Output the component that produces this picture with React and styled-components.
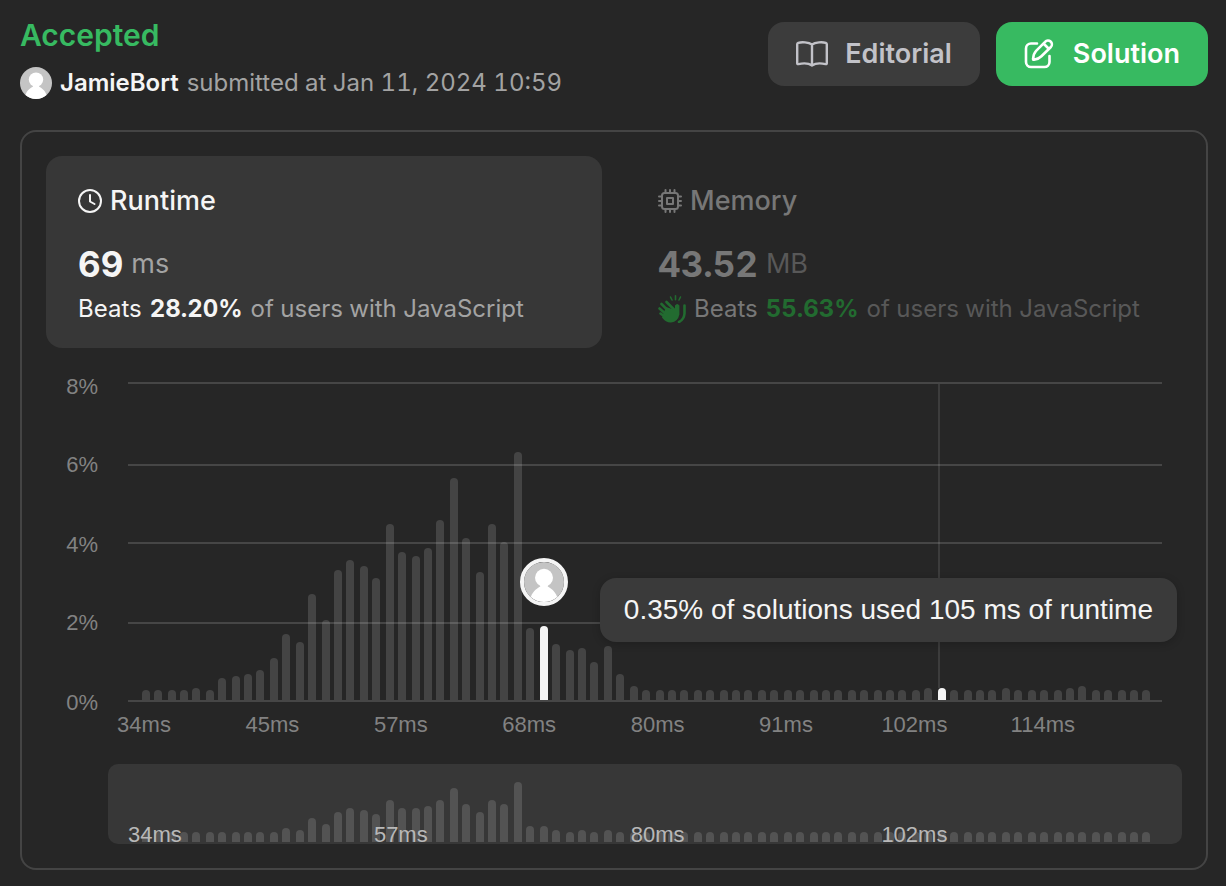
import React from "react";
import styled, { createGlobalStyle } from "styled-components";

const GlobalStyle = createGlobalStyle`
  *, *::before, *::after { box-sizing: border-box; }
  body {
    margin: 0;
    background: #262626;
    color: #f5f5f5;
    font-family: Inter, "Liberation Sans", sans-serif;
    font-variant-numeric: tabular-nums;
  }
  button { font: inherit; font-variant-numeric: inherit; color: inherit; border: 0; cursor: pointer; }
  h1, p { margin: 0; }
`;

const Page = styled.main`
  display: flex;
  flex-direction: column;
  gap: 30px;
  padding: 16px 18px 16px 20px;
`;

const Header = styled.header`
  display: flex;
  justify-content: space-between;
  align-items: flex-start;
  gap: 16px;
`;

const Summary = styled.div`
  display: flex;
  flex-direction: column;
  gap: 12px;
`;

const Status = styled.h1`
  color: #37ba61;
  font-size: 30px;
  line-height: 38px;
  font-weight: 600;
`;

const Byline = styled.div`
  display: flex;
  align-items: center;
  gap: 8px;
  font-size: 24px;
  line-height: 34px;
  color: #a3a3a3;
`;

const Author = styled.a`
  color: #f5f5f5;
  font-weight: 600;
  text-decoration: none;
`;

const Actions = styled.div`
  display: flex;
  gap: 16px;
  padding-top: 6px;
`;

const ActionButton = styled.button`
  display: flex;
  align-items: center;
  gap: 17px;
  height: 64px;
  padding: 0 28px;
  border-radius: 16px;
  font-size: 27px;
  line-height: 36px;
  font-weight: 600;
  background: ${(p) => (p.$primary ? "#37ba61" : "#3c3c3c")};
  color: ${(p) => (p.$primary ? "#ffffff" : "#c2c2c8")};
`;

const Panel = styled.section`
  display: flex;
  flex-direction: column;
  border: 2px solid #444444;
  border-radius: 16px;
  padding: 24px;
`;

const Metrics = styled.div`
  display: grid;
  grid-template-columns: 1fr 1fr;
  gap: 24px;
`;

const MetricCard = styled.button`
  display: flex;
  flex-direction: column;
  align-items: flex-start;
  height: 192px;
  padding: 26px 32px;
  border-radius: 16px;
  text-align: left;
  white-space: nowrap;
  background: ${(p) => (p.$active ? "#373737" : "transparent")};
  --strong: ${(p) => (p.$active ? "#f5f5f5" : "#777777")};
  --soft: ${(p) => (p.$active ? "#a3a3a3" : "#585858")};
  --share: ${(p) => (p.$active ? "#f5f5f5" : "#226b30")};
  color: var(--strong);
`;

const MetricTitle = styled.span`
  display: flex;
  align-items: center;
  gap: 8px;
  font-size: 27px;
  line-height: 37px;
  font-weight: 500;
`;

const MetricValue = styled.span`
  display: flex;
  align-items: center;
  gap: 8px;
  margin-top: 23px;
  font-size: 35px;
  line-height: 44px;
  font-weight: 700;
`;

const Unit = styled.span`
  font-size: 27px;
  font-weight: 400;
  color: var(--soft);
`;

const MetricNote = styled.span`
  display: flex;
  align-items: center;
  gap: 8px;
  font-size: 24px;
  line-height: 46px;
  color: var(--soft);

  b { color: var(--share); font-weight: 700; }
  em { color: var(--strong); font-style: normal; }
  svg { color: var(--share); }
`;

const ChartArea = styled.div`
  position: relative;
  margin-top: 24px;
`;

const ChartSvg = styled.svg`
  display: block;
  width: 100%;
  height: auto;
  overflow: visible;
  font-family: "Liberation Sans", sans-serif;
  font-size: 22px;
`;

const Tooltip = styled.div`
  position: absolute;
  right: 5px;
  top: 206px;
  padding: 14px 24px;
  border-radius: 16px;
  background: #3a3a3a;
  box-shadow: 0 2px 8px rgba(0, 0, 0, 0.2);
  font-family: "Liberation Sans", sans-serif;
  font-size: 28px;
  line-height: 36px;
  white-space: nowrap;
`;

const MAIN = [
  10, 10, 10, 10, 12, 10, 22, 24, 26, 30, 42, 66, 58, 106, 80, 130, 140, 134, 122, 176,
  148, 144, 152, 180, 222, 162, 128, 176, 158, 248, 72, 74, 56, 50, 52, 38, 54, 26, 14,
  ...Array(22).fill(10), 12, 12, 10, 10, 10, 10, 12, 10, 10, 10, 10, 12, 14, 10, 10, 10, 10, 10,
];

const OVERVIEW = [
  ...Array(11).fill(10), 14, 12, 24, 18, 30, 34, 32, 28, 42, 34, 34, 36, 42, 54, 38, 30,
  42, 38, 60, 16, 16, 12, 10, 12, 10, 12, ...Array(42).fill(10),
];

const GRID = [
  { label: "8%", line: 10, baseline: 22 },
  { label: "6%", line: 92, baseline: 100 },
  { label: "4%", line: 170, baseline: 180 },
  { label: "2%", line: 250, baseline: 258 },
  { label: "0%", line: 328, baseline: 338 },
];

const TICKS = ["34ms", "45ms", "57ms", "68ms", "80ms", "91ms", "102ms", "114ms"];

const HIGHLIGHTED = [31, 62];

const barX = (i) => 2 * Math.round((95.4 + i * 12.84) / 2);

const barPath = (x, base, h) =>
  `M${x} ${base}v${4 - h}a4 4 0 0 1 8 0v${h - 4}z`;

function Bars({ values, base, highlighted = [] }) {
  return values.map((h, i) => (
    <path
      key={i}
      d={barPath(barX(i), base, h)}
      fill={highlighted.includes(i) ? "#f5f5f5" : "rgba(255,255,255,0.14)"}
    />
  ));
}

function AvatarArt({ ring }) {
  return (
    <>
      <circle cx="16" cy="16" r="16" fill="#c4c4c4" />
      <ellipse cx="16" cy="12.6" rx="7.2" ry="7.2" fill="#fff" />
      <path d="M13 17h6v2.600c1.500.9 6 3.400 7.500 8.400A16 16 0 0 1 5.500 28C7 23 11.500 20.500 13 19.600z" fill="#fff" />
      {ring && <circle cx="16" cy="16" r="17.600" fill="none" stroke="#f5f5f5" strokeWidth="3.200" />}
    </>
  );
}

function RuntimeChart() {
  return (
    <ChartSvg viewBox="0 0 1136 472" role="img" aria-label="Runtime distribution">
      <Bars values={MAIN} base={328} highlighted={HIGHLIGHTED} />
      {GRID.map((g) => (
        <g key={g.label}>
          <rect x="82" y={g.line} width="1034" height="2" fill="rgba(255,255,255,0.15)" />
          <text x="52" y={g.baseline} textAnchor="end" fill="#828282">{g.label}</text>
        </g>
      ))}
      <rect x="892" y="12" width="2" height="304" fill="rgba(255,255,255,0.1)" />
      {TICKS.map((t, i) => (
        <text key={t} x={98 + i * 128.4} y="360" textAnchor="middle" fill="#828282">{t}</text>
      ))}
      <g transform="translate(478 190) scale(1.250)"><AvatarArt ring /></g>
      <rect x="62" y="392" width="1074" height="80" rx="10" fill="#373737" />
      <Bars values={OVERVIEW} base={470} />
      {TICKS.map((t, i) =>
        i % 2 === 0 ? (
          <text
            key={t}
            x={i === 0 ? 82 : 98 + i * 128.4}
            y="470"
            textAnchor={i === 0 ? "start" : "middle"}
            fill="#b8b8b8"
          >
            {t}
          </text>
        ) : null
      )}
    </ChartSvg>
  );
}

const stroke = { fill: "none", stroke: "currentColor", strokeLinecap: "round", strokeLinejoin: "round" };

const BookIcon = () => (
  <svg width="32" height="26" viewBox="0 0 32 26" {...stroke} strokeWidth="2.400">
    <path d="M16 3.500C12.500 1 5.500.900 2.200 1.800Q1.200 2.200 1.200 3.200v19q0 1.200 1.200.9C6.500 22.200 12.500 22 16 24.500c3.500-2.500 9.500-2.300 13.600-1.400q1.200.3 1.200-.9v-19q0-1-1-1.400C26.500.900 19.500 1 16 3.500zv21" />
  </svg>
);

const EditIcon = () => (
  <svg width="32" height="32" viewBox="0 -1 32 32" {...stroke} strokeWidth="2.600">
    <path d="M13 4.500H7a5 5 0 0 0-5 5V23a5 5 0 0 0 5 5h13.500a5 5 0 0 0 5-5v-6" />
    <path d="M10 20.800c-.8.100-1-.3-.9-1 .3-3.600 1-6 3-8l9-9a3.800 3.800 0 0 1 5.800 5.200l-9.500 9.300c-2 2-4 3-7.400 3.500zM20 5l5 5" />
  </svg>
);

const ClockIcon = () => (
  <svg width="24" height="24" viewBox="0 0 24 24" {...stroke} strokeWidth="2">
    <circle cx="12" cy="12" r="11" />
    <path d="M12 6v6.500l4.500 2.500" />
  </svg>
);

const ChipIcon = () => (
  <svg width="24" height="24" viewBox="0 0 24 24" {...stroke} strokeWidth="2">
    <rect x="4" y="4" width="16" height="16" rx="2.500" />
    <rect x="9" y="9" width="6" height="6" />
    <path d="M7.500 1v3M12 1v3M16.500 1v3M7.500 20v3M12 20v3M16.500 20v3M1 7.500h3M1 12h3M1 16.500h3M20 7.500h3M20 12h3M20 16.500h3" />
  </svg>
);

const ClapIcon = () => (
  <svg width="28" height="28" viewBox="0 0 28 28" {...stroke}>
    <path d="M1.500 13.500l8 7M2.500 18.500l6 4.500M3.500 9l9 9M8.500 7l9 9" strokeWidth="2.600" />
    <path d="M8 12l9 3V10.500q2.200-3 4.400 0v9q-1.400 7-8.400 8-5 .3-9-5z" fill="currentColor" stroke="none" />
    <path d="M26.500 10.500v8q-.5 6-5.500 8.500" strokeWidth="2.600" />
    <path d="M12.500 2l1.500 3M17.500.8v4M22.500 2l-1.500 3" strokeWidth="1.600" />
  </svg>
);

export default function App() {
  return (
    <>
      <GlobalStyle />
      <Page>
        <Header>
          <Summary>
            <Status>Accepted</Status>
            <Byline>
              <svg width="32" height="32" viewBox="0 0 32 32"><AvatarArt /></svg>
              <Author href="#profile">JamieBort</Author>
              <span>submitted at Jan 11, 2024 10:59</span>
            </Byline>
          </Summary>
          <Actions>
            <ActionButton><BookIcon />Editorial</ActionButton>
            <ActionButton $primary><EditIcon />Solution</ActionButton>
          </Actions>
        </Header>
        <Panel>
          <Metrics>
            <MetricCard $active>
              <MetricTitle><ClockIcon />Runtime</MetricTitle>
              <MetricValue>69 <Unit>ms</Unit></MetricValue>
              <MetricNote><em>Beats</em><b>28.20%</b><span>of users with JavaScript</span></MetricNote>
            </MetricCard>
            <MetricCard>
              <MetricTitle><ChipIcon />Memory</MetricTitle>
              <MetricValue>43.52 <Unit>MB</Unit></MetricValue>
              <MetricNote><ClapIcon /><em>Beats</em><b>55.63%</b><span>of users with JavaScript</span></MetricNote>
            </MetricCard>
          </Metrics>
          <ChartArea>
            <RuntimeChart />
            <Tooltip role="tooltip">0.35% of solutions used 105 ms of runtime</Tooltip>
          </ChartArea>
        </Panel>
      </Page>
    </>
  );
}
